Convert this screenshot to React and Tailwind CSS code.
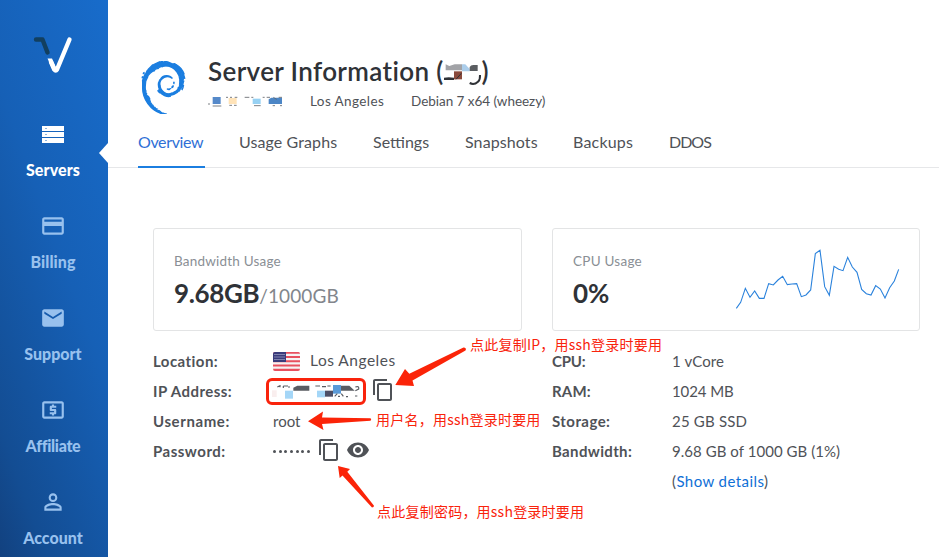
import { SiDebian } from 'react-icons/si';
import { MdContentCopy, MdVisibility, MdEmail, MdCreditCard, MdLocalAtm, MdPermIdentity } from 'react-icons/md';

function ServersIcon() {
  return (
    <svg width="22" height="17" viewBox="0 0 22 17" fill="currentColor">
      <path d="M0 0h22v5H0zM0 6h22v5H0zM0 12h22v5H0z" />
      <path d="M3.500 2h1v1h-1zM3.500 8h1v1h-1zM3.500 14h1v1h-1z" fill="#1a66b8" />
    </svg>
  );
}

const NAV = [
  { label: 'Servers', icon: <ServersIcon />, tone: 'text-white', track: 'tracking-[0.1px]' },
  { label: 'Billing', icon: <MdCreditCard size={26} />, tone: 'text-[#98c1ee]', track: 'tracking-[0.1px]' },
  { label: 'Support', icon: <MdEmail size={26} />, tone: 'text-[#98c1ee]', track: 'tracking-[0px]' },
  { label: 'Affiliate', icon: <MdLocalAtm size={26} />, tone: 'text-[#98c1ee]', track: 'tracking-[-0.3px]' },
  { label: 'Account', icon: <MdPermIdentity size={26} />, tone: 'text-[#98c1ee]', track: 'tracking-[0px]' },
];

function Sidebar() {
  return (
    <nav className="flex h-full w-[108px] shrink-0 flex-col items-center bg-[linear-gradient(250deg,#186ccb_0%,#1660b6_45%,#134d93_85%,#12417f_100%)] pt-[36px] pr-[2px]">
      <svg width="40" height="38" viewBox="0 0 40 38" fill="none" className="shrink-0">
        <path d="M3 3.500h6.500L14.500 16.500" stroke="#123f5f" strokeWidth="4.400" strokeLinecap="round" strokeLinejoin="round" />
        <path d="M14.500 22.500H19L23.500 32.500L20 35z" fill="#fff" />
        <path d="M18 26L21.300 33.500Q22.700 35.500 24 33.500L36.500 3.500" stroke="#fff" strokeWidth="4.400" strokeLinejoin="round" strokeLinecap="round" />
      </svg>
      <div className="mt-[47px] flex flex-col">
        {NAV.map((n) => (
          <div key={n.label} className={`flex h-[92px] flex-col items-center ${n.tone}`}>
            <div className="flex h-[26px] items-center">{n.icon}</div>
            <div className={`mt-[11px] text-[16px] leading-[24px] font-black ${n.track}`}>{n.label}</div>
          </div>
        ))}
      </div>
    </nav>
  );
}

const TABS = [
  { label: 'Overview', cls: 'w-[67px] border-b-2 border-[#1b7ee0] text-[#2f6fd6] tracking-[-0.35px]' },
  { label: 'Usage Graphs', cls: 'w-[100px] tracking-[0.1px]' },
  { label: 'Settings', cls: 'w-[58px]' },
  { label: 'Snapshots', cls: 'w-[74px] tracking-[0.1px]' },
  { label: 'Backups', cls: 'w-[62px] tracking-[0.2px]' },
  { label: 'DDOS', cls: 'w-[60px] tracking-[-1px]' },
];

function Header() {
  return (
    <header className="border-b border-[#e6e7e9] pl-[30px]">
      <div className="flex pt-[56px]">
        <SiDebian className="mt-[5px] -ml-px h-[53px] w-[53px] stroke-current stroke-[0.6] text-[#1b7ee0]" />
        <div className="ml-[18px]">
          <h1 className="flex h-[30px] items-center text-[26px] font-semibold text-[#2f3237]">
            <span className="tracking-[0.36px]">Server Information (</span>
            <svg width="39" height="24" viewBox="0 0 117 72" className="-mr-px overflow-visible">
              <path d="M5 16L16 21L32 16H54V34H5z" fill="#a2a3a7" />
              <path d="M54 16H64L77 30V37H54z" fill="#abcdea" />
              <path d="M77 24Q80 18 88 18H101V36H77z" fill="#5a5d61" />
              <path d="M30 37H54V61H30z" fill="#8a4a3c" />
              <path d="M0 56Q14 54 30 56V63H0z" fill="#2f3237" />
              <path d="M36 61L52 43" stroke="#2f3237" strokeWidth="3" />
              <path d="M77 72Q90 79 102 68Q109 62 108 48" stroke="#2f3237" strokeWidth="6" fill="none" />
            </svg>
            <span>)</span>
          </h1>
          <div className="mt-[5px] flex h-[20px] items-center text-[13.5px] text-[#4f5257]">
            <svg width="76" height="12" viewBox="0 0 228 36" className="mr-[26px] shrink-0">
              <path d="M14 6H38V27H14z" fill="#5589c9" />
              <path d="M62 9H86V27H62z" fill="#ffe3b8" />
              <path d="M134 11H158V27H134z" fill="#97d1f3" />
              <path d="M182 13L190 8H222V27H182z" fill="#4c86c6" />
              <path d="M0 27H6M14 33H40M64 31H72M78 31H86M138 32H158M194 32H201M216 32H222M54 7H60M66 7H72M80 7H88M110 7H124M130 7H136M164 7H170M176 7H186M196 7L206 13M212 7H222" stroke="#62656a" strokeWidth="2.500" />
            </svg>
            <span className="w-[101px] tracking-[0.4px]">Los Angeles</span>
            <span className="tracking-[-0.03px]">Debian 7 x64 (wheezy)</span>
          </div>
        </div>
      </div>
      <div className="mt-[13px] flex gap-[34px] text-[16px] text-[#4f5257]">
        {TABS.map((t) => (
          <div key={t.label} className={`-mb-px h-[41px] pt-[3px] leading-[24px] whitespace-nowrap ${t.cls}`}>{t.label}</div>
        ))}
      </div>
    </header>
  );
}

function Cards() {
  return (
    <div className="flex gap-[30px] pt-[60px] pr-[19px] pl-[45px]">
      <section className="h-[103px] w-[369px] rounded-[3px] border border-[#e3e4e5] px-5 pt-[22px]">
        <div className="text-[13.5px] leading-[20px] tracking-[0.2px] text-[#8a8f95]">Bandwidth Usage</div>
        <div className="mt-[5px] flex items-baseline leading-[34px]">
          <span className="text-[26px] font-bold tracking-[-0.35px] text-[#2f3237]">9.68GB</span>
          <span className="text-[19px] tracking-[0.1px] text-[#82868c]">/1000GB</span>
        </div>
      </section>
      <section className="flex h-[103px] w-[368px] justify-between rounded-[3px] border border-[#e3e4e5] pt-[18px] pr-[18px] pl-5">
        <div className="pt-1">
          <div className="text-[13.5px] leading-[20px] tracking-[0.25px] text-[#8a8f95]">CPU Usage</div>
          <div className="mt-[5px] text-[26px] leading-[34px] font-bold text-[#2f3237]">0%</div>
        </div>
        <svg width="167" height="64" viewBox="27 66 501 192" fill="none">
          <polyline
            points="34,250 47,232 61,190 75,217 89,198 103,220 117,220 131,176 145,180 159,165 173,154 187,179 201,177 215,176 229,215 243,210 257,195 271,86 285,76 299,185 313,211 327,124 341,133 354,137 368,97 382,126 396,142 410,193 424,206 438,210 452,182 466,192 480,219 494,188 508,168 521,133"
            stroke="#2a82dc"
            strokeWidth="3.300"
          />
        </svg>
      </section>
    </div>
  );
}

function Flag() {
  return (
    <svg width="27" height="19" viewBox="0 0 27 19" className="mr-[10px]">
      <rect width="27" height="19" rx="2" fill="#f6f3f4" />
      <path d="M1.500 0H25.500Q27 0 27 1.800H0Q0 0 1.500 0zM0 4h27v2H0zM0 8.200h27v2H0zM0 12.400h27v2H0zM0 16.800h27Q27 19 25 19H2Q0 19 0 16.800z" fill="#e8505f" />
      <path d="M2 0H13V10H0V2Q0 0 2 0z" fill="#3a3c7c" />
      <path d="M1.500 2.500H12M1.500 5H12M1.500 7.500H12" stroke="#c9cbe2" strokeWidth="1" strokeDasharray="1 1" />
    </svg>
  );
}

function MaskedAddress() {
  return (
    <div className="mt-px ml-[-7px] flex h-[27px] w-[100px] shrink-0 items-center justify-center rounded-[6px] border-[3px] border-[#f9230c]">
      <svg width="88" height="14" viewBox="0 0 264 42">
        <path d="M0 16H14V36H0z" fill="#f9eeee" />
        <path d="M64 20V8L76 2H112V17H64z" fill="#595c62" />
        <path d="M39 17H63V41H39z" fill="#a4d6f7" />
        <path d="M135 17H159V37H135z" fill="#a4d6f7" />
        <path d="M159 17H183V35H159z" fill="#4d4f66" />
        <path d="M183 0H207V26H183z" fill="#5b9bd8" />
        <path d="M207 2H232L248 17H207z" fill="#595c62" />
        <path d="M16 6L24 2V7M34 3H48M34 3V9M48 6H54M130 3H144M150 5H162M166 3H176M188 34L196 26M198 34H204M208 26L214 34M250 6Q262 2 260 12L250 17M249 33H256M222 35H228" stroke="#595c62" strokeWidth="3.500" fill="none" />
      </svg>
    </div>
  );
}

function Row({ label, children, track }) {
  return (
    <div className="flex h-[30px] items-center">
      <div className={`w-[120px] shrink-0 font-bold ${track || 'tracking-[0.4px]'}`}>{label}</div>
      <div className="flex items-center whitespace-nowrap">{children}</div>
    </div>
  );
}

function Details() {
  return (
    <div className="flex pt-[15px] pl-[45px] text-[15px] text-[#4f5257]">
      <div className="w-[399px]">
        <Row label="Location:" track="tracking-[0.45px]">
          <Flag />
          <span className="text-[15.5px] tracking-[0.5px]">Los Angeles</span>
        </Row>
        <Row label="IP Address:" track="tracking-[0.45px]">
          <MaskedAddress />
          <MdContentCopy size={24} className="mb-[2px] ml-[5px]" />
        </Row>
        <Row label="Username:" track="tracking-[0.6px]">
          <span>root</span>
        </Row>
        <Row label="Password:" track="tracking-[0.5px]">
          <span className="flex w-[37px] justify-between">
            {[0, 1, 2, 3, 4, 5, 6].map((i) => (
              <i key={i} className="size-[3px] rounded-full bg-[#4f5257]" />
            ))}
          </span>
          <MdContentCopy size={24} className="mb-[2px] ml-[7px]" />
          <MdVisibility size={24} className="mb-[2px] ml-[5px]" />
        </Row>
      </div>
      <div>
        <Row label="CPU:" track="tracking-[-0.2px]">
          <span className="tracking-[0.1px]">1 vCore</span>
        </Row>
        <Row label="RAM:" track="tracking-[0.2px]">
          <span className="tracking-[-0.1px]">1024 MB</span>
        </Row>
        <Row label="Storage:" track="tracking-[0.45px]">
          <span className="tracking-[0.2px]">25 GB SSD</span>
        </Row>
        <Row label="Bandwidth:" track="tracking-[0.35px]">
          <span className="tracking-[0.05px]">9.68 GB of 1000 GB (1%)</span>
        </Row>
        <Row label="">
          <span className="tracking-[0.42px]">
            (<span className="text-[#0f6fd6]">Show details</span>)
          </span>
        </Row>
      </div>
    </div>
  );
}

function Notes() {
  return (
    <div className="pointer-events-none absolute inset-0 font-['Noto_Sans_CJK_SC',sans-serif] text-[14px] leading-[20px] tracking-[0.23px] whitespace-nowrap text-[#f9230c]">
      <svg width="939" height="557" viewBox="0 0 939 557" className="absolute inset-0" fill="#fb2408">
        <path d="M395.300 385L405 369L409.300 373.700L463.500 347.600Q467 348 465.500 350.500L412.500 380.500L414 386z" />
        <path d="M308 421.300L323 411.500L322 417.500L370.500 418.300Q372 419.500 370.500 420.800L322 424L323.500 430z" />
        <path d="M338 466L350 469L347.300 471.700L374 505.700Q374 507.500 372 507.500L342.500 475.500L339.700 478z" />
      </svg>
      <span className="absolute top-[334px] left-[470px]">点此复制IP，用ssh登录时要用</span>
      <span className="absolute top-[409px] left-[376px]">用户名，用ssh登录时要用</span>
      <span className="absolute top-[501px] left-[377px]">点此复制密码，用ssh登录时要用</span>
    </div>
  );
}

export default function App() {
  return (
    <div className="relative flex h-[557px] w-[939px] overflow-hidden bg-white font-[Lato,'Open_Sans',sans-serif]">
      <Sidebar />
      <main className="min-w-0 flex-1">
        <Header />
        <Cards />
        <Details />
      </main>
      <svg width="9" height="20" viewBox="0 0 9 20" className="absolute top-[143px] left-[99px]">
        <path d="M9 0V20L0 10z" fill="#fff" />
      </svg>
      <Notes />
    </div>
  );
}
